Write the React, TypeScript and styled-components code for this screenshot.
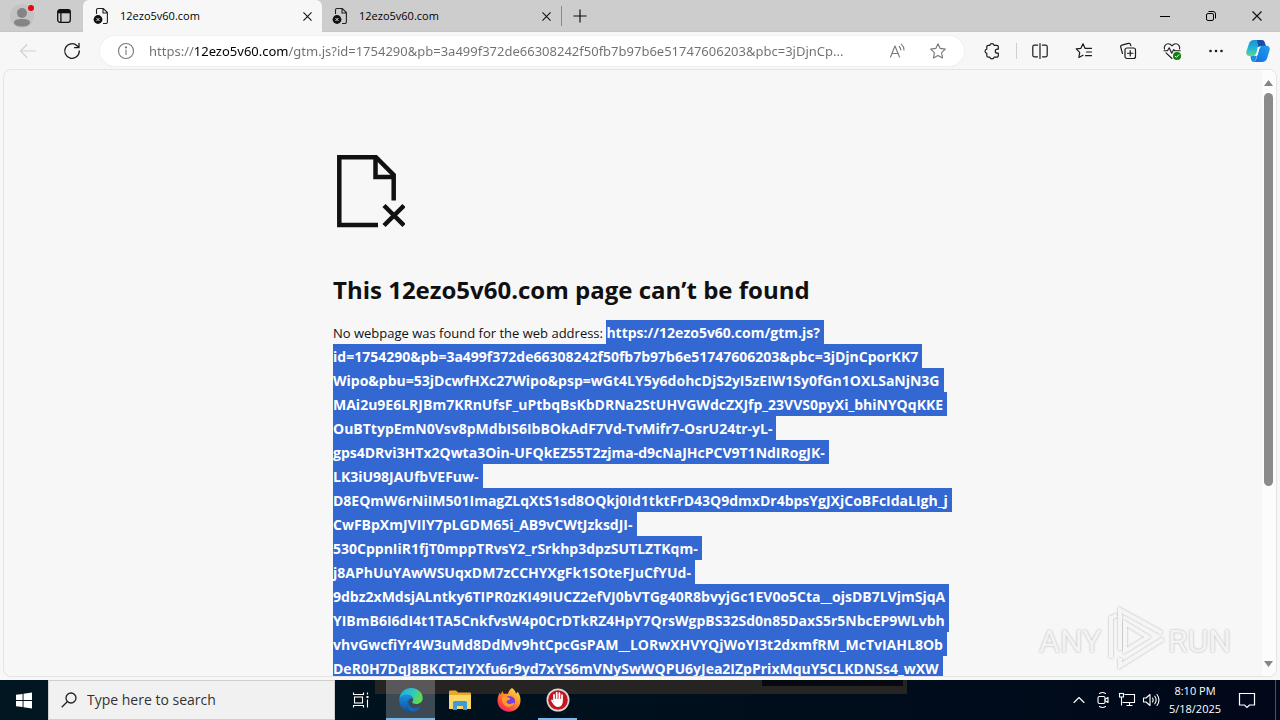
import React from "react";
import styled, { createGlobalStyle } from "styled-components";

const GlobalStyle = createGlobalStyle`
  * { box-sizing: border-box; }
  body {
    margin: 0;
    overflow: hidden;
    background: #f7f7f7;
    font-family: "Open Sans", "Noto Sans", sans-serif;
    color: #111;
  }
  button { border: 0; padding: 0; background: none; color: inherit; font: inherit; }
  svg { display: block; flex: none; }
`;

const Desktop = styled.div`
  display: flex;
  flex-direction: column;
  height: 100vh;
`;

const TabStrip = styled.header`
  display: flex;
  align-items: stretch;
  height: 32px;
  flex: none;
  background: #cdcdcd;
  border-bottom: 1px solid #c6c6c6;
`;

const StripButton = styled.button<{ $width: number }>`
  display: flex;
  align-items: center;
  justify-content: center;
  width: ${(p) => p.$width}px;
  flex: none;
`;

const Tab = styled.div<{ $active?: boolean }>`
  display: flex;
  align-items: center;
  width: 239px;
  height: 32px;
  padding: 0 7px 0 10px;
  flex: none;
  border-radius: 6px 6px 0 0;
  background: ${(p) => (p.$active ? "#f7f7f7" : "transparent")};
`;

const TabTitle = styled.span`
  flex: 1;
  margin-left: 11px;
  font-size: 11px;
  line-height: 16px;
  white-space: nowrap;
  color: #000;
`;

const CloseTab = styled.button`
  display: flex;
  align-items: center;
  justify-content: center;
  width: 16px;
  height: 16px;
`;

const TabDivider = styled.span`
  width: 1px;
  height: 20px;
  margin-top: 6px;
  background: #8a8a8a;
`;

const WindowControls = styled.div`
  display: flex;
  margin-left: auto;
`;

const Toolbar = styled.div`
  display: flex;
  align-items: center;
  height: 37px;
  flex: none;
  padding: 0 2px 0 6px;
  background: #f7f7f7;
`;

const ToolButton = styled.button<{ $faded?: boolean; $width?: number }>`
  display: flex;
  align-items: center;
  justify-content: center;
  width: ${(p) => p.$width ?? 44}px;
  height: 30px;
  flex: none;
  color: ${(p) => (p.$faded ? "#d0d0d0" : "#1b1b1b")};
`;

const AddressBar = styled.div`
  display: flex;
  align-items: center;
  flex: 1;
  min-width: 0;
  height: 30px;
  margin: 0 6px;
  padding: 0 6px;
  border-radius: 15px;
  background: #fff;
  box-shadow: 0 0 1px 1px #f0f0f0;
`;

const AddressButton = styled.button`
  display: flex;
  align-items: center;
  justify-content: center;
  width: 40px;
  height: 28px;
  flex: none;
  color: #777;
`;

const AddressInput = styled.input`
  flex: 1;
  min-width: 0;
  height: 28px;
  margin-left: 3px;
  padding: 0;
  border: 0;
  outline: 0;
  font: 13px/20px "Noto Sans", "Open Sans", sans-serif;
  text-overflow: ellipsis;
  color: #6f6f6f;
  background: linear-gradient(to right, #6f6f6f 46px, #000 46px, #000 139px, #6f6f6f 139px);
  background-clip: text;
  -webkit-background-clip: text;
  -webkit-text-fill-color: transparent;
`;

const ToolDivider = styled.span`
  width: 1px;
  height: 16px;
  margin: 0 1px 0 2px;
  background: #cfcfcf;
`;

const Viewport = styled.div`
  display: flex;
  flex: 1;
  min-height: 0;
  margin: 0 3px 3px;
  border: 1px solid #e4e4e4;
  border-radius: 8px;
  overflow: hidden;
  background: #f7f7f7;
  position: relative;
`;

const Page = styled.main`
  flex: 1;
  min-width: 0;
  overflow: hidden;
`;

const ErrorCard = styled.section`
  width: 600px;
  margin: 0 auto;
  padding-top: 84px;
`;

const Heading = styled.h1`
  margin: 42px 0 0;
  font-size: 24px;
  line-height: 40px;
  font-weight: 700;
  color: #101010;
  white-space: nowrap;
`;

const Message = styled.p`
  margin: 11px 0 0;
  font-size: 13px;
  line-height: 24px;
  white-space: nowrap;
  color: #111;
`;

const Selected = styled.strong`
  display: inline-block;
  height: 24px;
  margin-top: -1px;
  padding: 1px 4px 0 0;
  vertical-align: top;
  font-size: 14px;
  font-weight: 700;
  color: #fff;
  background: #3367d1;
`;

const Scrollbar = styled.div`
  display: flex;
  flex-direction: column;
  align-items: center;
  width: 14px;
  flex: none;
  padding: 9px 2px 8px 0;
  background: #fcfcfc;
`;

const ScrollArrow = styled.button`
  display: block;
  height: 8px;
`;

const ScrollTrack = styled.div`
  flex: 1;
  width: 9px;
  margin: 6px 0;
`;

const ScrollThumb = styled.div`
  height: 70%;
  border-radius: 5px;
  background: #8b8b8b;
`;

const Watermark = styled.div`
  position: absolute;
  right: 40px;
  bottom: 4px;
`;

const Taskbar = styled.footer`
  position: relative;
  display: flex;
  height: 40px;
  flex: none;
  background: linear-gradient(to right, #001620, #000f1c 55%, #00081a);
`;

const WindowShadow = styled.div`
  position: absolute;
  left: 375px;
  top: 0;
  width: 532px;
  height: 14px;
  padding: 0 4px 0 0;
  background: #262323;
`;

const ShadowSlot = styled.div`
  width: 141px;
  height: 6px;
  margin-left: auto;
  background: #060a10;
`;

const TaskButton = styled.button<{ $active?: boolean; $running?: boolean; $width?: number }>`
  position: relative;
  display: flex;
  align-items: center;
  justify-content: center;
  width: ${(p) => p.$width ?? 49}px;
  height: 40px;
  flex: none;
  color: #fff;
  background: ${(p) => (p.$active ? "rgba(255, 255, 255, 0.24)" : "transparent")};
  &::after {
    content: "";
    position: absolute;
    left: ${(p) => (p.$active ? 0 : 5)}px;
    right: ${(p) => (p.$active ? 0 : 5)}px;
    bottom: 0;
    height: 2px;
    background: ${(p) => (p.$active || p.$running ? "#76b9ed" : "transparent")};
  }
`;

const SearchBox = styled.label`
  display: flex;
  align-items: center;
  width: 287px;
  height: 40px;
  margin: 0 1px 0 0;
  padding-left: 12px;
  flex: none;
  background: #f1f1f1;
  border: 1px solid #cfcfcf;
`;

const SearchInput = styled.input`
  flex: 1;
  min-width: 0;
  margin-left: 10px;
  padding: 0;
  border: 0;
  outline: 0;
  background: none;
  font: 14px/20px "Open Sans", "Noto Sans", sans-serif;
  &::placeholder { color: #333; opacity: 1; }
`;

const Tray = styled.div`
  display: flex;
  margin-left: auto;
`;

const Clock = styled.time`
  display: flex;
  flex-direction: column;
  align-items: center;
  justify-content: center;
  width: 64px;
  font-size: 11px;
  line-height: 18px;
  color: #fff;
  white-space: nowrap;
`;

const DesktopEdge = styled.span`
  width: 5px;
  margin-left: 8px;
  border-left: 1px solid #4d535f;
`;

const line = { fill: "none", stroke: "currentColor", strokeWidth: 1.1, strokeLinecap: "round", strokeLinejoin: "round" } as const;

const ProfileIcon = () => (
  <svg width="28" height="28" viewBox="0 0 28 28">
    <circle cx="14" cy="14" r="12" fill="#c3c3c3" />
    <circle cx="14" cy="11" r="5" fill="#858585" />
    <path d="M6 20.500C6 18 9 17 14 17s8 1 8 3.500C22 23 18.500 24.500 14 24.500S6 23 6 20.500z" fill="#858585" />
    <circle cx="23" cy="6" r="3" fill="#e30613" />
  </svg>
);
const TabActionsIcon = () => (
  <svg width="16" height="16" viewBox="0 0 16 16" fill="none" stroke="#111" strokeWidth="1.300">
    <rect x="1.700" y="1.700" width="12.600" height="12.600" rx="2.200" />
    <path d="M2 3.600h12" strokeWidth="3.400" />
    <path d="M4.900 4v10" />
  </svg>
);
const BrokenPageIcon = () => (
  <svg width="16" height="18" viewBox="0 0 16 18">
    <path d="M3.500 7V3a1.500 1.500 0 0 1 1.500-1.500h5.300L14.400 5.600V15a1.500 1.500 0 0 1-1.500 1.500H10M10 1.700V6h4.300" fill="none" stroke="#222" strokeWidth="1.100" />
    <circle cx="5" cy="12.500" r="4.400" fill="#111" />
    <path d="M3.500 11l3 3M6.500 11l-3 3" stroke="#ddd" strokeWidth="1" />
  </svg>
);
const CrossIcon = ({ size = 9 }: { size?: number }) => (
  <svg width={size} height={size} viewBox="0 0 10 10" fill="none" stroke="#111" strokeWidth="1.200">
    <path d="M.5.5l9 9M9.500.5l-9 9" />
  </svg>
);
const PlusIcon = () => (
  <svg width="14" height="14" viewBox="0 0 14 14" stroke="#111" strokeWidth="1.200"><path d="M7 .5v13M.5 7h13" /></svg>
);
const MinimizeIcon = () => (
  <svg width="10" height="10" viewBox="0 0 10 10"><path d="M0 5.500h10" stroke="#000" /></svg>
);
const RestoreIcon = () => (
  <svg width="10" height="10" viewBox="0 0 10 10" fill="none" stroke="#000">
    <rect x=".5" y="2.500" width="7" height="7" rx="1.500" />
    <path d="M2.500.5H7A2.500 2.500 0 0 1 9.500 3v4.500" />
  </svg>
);
const BackIcon = () => (
  <svg width="18" height="16" viewBox="0 0 18 16" {...line}><path d="M16.500 8H2M8 1.500L1.500 8 8 14.500" /></svg>
);
const RefreshIcon = () => (
  <svg width="18" height="18" viewBox="0 0 18 18" {...line} strokeWidth={1.3}>
    <path d="M16.300 9a7.300 7.300 0 1 1-2.200-5.200L16 5.600M16 1.300v4.400h-4.400" />
  </svg>
);
const InfoIcon = () => (
  <svg width="18" height="18" viewBox="0 0 18 18" {...line}>
    <circle cx="9" cy="9" r="7.500" /><path d="M9 8v4.500" /><circle cx="9" cy="5.400" r=".5" fill="currentColor" />
  </svg>
);
const ReadAloudIcon = () => (
  <svg width="18" height="16" viewBox="0 0 18 16" {...line}>
    <path d="M1.500 14L6 3l4.500 11M3 10.500h6M10.200 3.500a5 5 0 0 1 1.600 3.500M12.300 1.200A8 8 0 0 1 15 7" />
  </svg>
);
const starPath = "M9 1.700l2.200 4.700 5.100.7-3.700 3.600.9 5.200L9 13.400l-4.500 2.500.9-5.200L1.700 7.100l5.100-.7z";
const StarIcon = () => <svg width="18" height="18" viewBox="0 0 18 18" {...line}><path d={starPath} /></svg>;
const PuzzleIcon = () => (
  <svg width="18" height="18" viewBox="0 0 18 18" {...line} strokeWidth={1.2}>
    <path d="M5.300 3.300h1.500a2.200 2.200 0 0 1 4.300 0h2.700a1.500 1.500 0 0 1 1.500 1.500v2.400h-1a2 2 0 0 0 0 4h1v2.500a1.500 1.500 0 0 1-1.500 1.500h-2.700a2.200 2.200 0 0 1-4.300 0H5.300a1.500 1.500 0 0 1-1.500-1.500v-2.300a2.200 2.200 0 0 1 0-4.300V4.800a1.500 1.500 0 0 1 1.500-1.500z" />
  </svg>
);
const SplitIcon = () => (
  <svg width="18" height="18" viewBox="0 0 18 18" {...line} strokeWidth={1.2}>
    <path d="M6.500 3.200H3.300A1.500 1.500 0 0 0 1.800 4.700v8.600a1.500 1.500 0 0 0 1.500 1.500h3.200M11.500 3.200h3.200a1.500 1.500 0 0 1 1.500 1.500v8.600a1.500 1.500 0 0 1-1.500 1.500h-3.200M9 1.500v15" />
  </svg>
);
const FavoritesIcon = () => (
  <svg width="18" height="18" viewBox="0 0 18 18" {...line} strokeWidth={1.2}>
    <path d="M10 6.300L8 1.800 5.900 6.300l-4.700.6 3.500 3.500-.8 5.100L8 13.300M10 6.300h6.500M11.500 10h5M10.500 13.700h6" />
  </svg>
);
const CollectionsIcon = () => (
  <svg width="18" height="18" viewBox="0 0 18 18" {...line} strokeWidth={1.2}>
    <rect x="6" y="6" width="10.500" height="10.500" rx="2" />
    <path d="M11.250 8.500v5.500M8.500 11.250H14M3.500 11.500L1.700 5.200a1.700 1.700 0 0 1 1.200-2.100l6.500-1.700a1.700 1.700 0 0 1 2.100 1.200l.3 1" />
  </svg>
);
const HealthIcon = () => (
  <svg width="18" height="18" viewBox="0 0 18 18" {...line}>
    <path d="M1.500 7C.5 4 3 1.800 5.200 1.800 7 1.800 8.200 2.800 9 3.800c.8-1 2-2 3.800-2C15 1.800 17.500 4 16.500 7M1 8.700h3.500l1.700-2.900 2.500 5.400 2-3.700 1 1.200h5.500M3 10.800l6 5.700" />
    <circle cx="14" cy="14" r="4" fill="#107c10" stroke="none" />
    <path d="M12.200 14.200l1.200 1.200 2.400-2.600" stroke="#fff" strokeWidth="1" />
  </svg>
);
const MoreIcon = () => (
  <svg width="14" height="4" viewBox="0 0 14 4" fill="#1b1b1b"><circle cx="1.500" cy="2" r="1.300" /><circle cx="7" cy="2" r="1.300" /><circle cx="12.500" cy="2" r="1.300" /></svg>
);
const CopilotIcon = () => (
  <svg width="24" height="24" viewBox="0 0 24 24">
    <defs>
      <linearGradient id="cpA" x1="0" y1="0" x2="0" y2="1"><stop offset="0" stopColor="#1b8fd6" /><stop offset=".5" stopColor="#20b3d8" /><stop offset="1" stopColor="#62d68a" /></linearGradient>
      <linearGradient id="cpB" x1="1" y1="0" x2="0" y2="1"><stop offset="0" stopColor="#2a9bf0" /><stop offset=".5" stopColor="#1585e8" /><stop offset="1" stopColor="#1a6be6" /></linearGradient>
    </defs>
    <path d="M8 1h8.500c-2 .8-2.700 2.700-3.500 5.500l-2.200 7.500c-.6 2-1.600 3-3.300 3H3.300C.8 17-.2 15 .4 12.500L3 4.500C3.800 2.200 5.300 1 8 1z" fill="url(#cpA)" />
    <path d="M11 1h5c1.700 0 2.400 1.200 3 3l.9 3h-4.600c-1.500 0-2.200.6-2.700 2z" fill="#174fa8" />
    <path d="M16 23H7.500c2-.8 2.700-2.700 3.500-5.500l2.200-7.700c.6-2 1.600-3 3.300-3h4.200c2.500 0 3.500 2 2.900 4.500L21 19.500C20.200 21.800 18.700 23 16 23z" fill="url(#cpB)" />
    <path d="M4.500 17h6.300c-.7 2.600-1.500 5.200-3.300 6-1.500-.2-2.200-1.400-2.600-3z" fill="#1c8fdc" />
    <path d="M11.800 8h3c-1 .6-1.300 1.300-1.600 2.300L11.700 16h-2.800c1-.6 1.300-1.300 1.600-2.300z" fill="#fff" />
  </svg>
);
const MissingFileArt = () => (
  <svg width="72" height="74" viewBox="0 0 72 74" fill="none" stroke="#111" strokeWidth="4.500">
    <path d="M45 71H6.300V3.200H43L60.700 21v25.500" />
    <path d="M42.500 3v20H61" />
    <path d="M51 51.500l20 20M71 51.500l-20 20" />
  </svg>
);
const WatermarkArt = styled.svg`
  font-family: Roboto, sans-serif;
  font-size: 32px;
  filter: drop-shadow(0 0 1px #b4b4b4);
`;
const AnyRunMark = () => (
  <WatermarkArt width="200" height="68" viewBox="0 0 200 68" fill="#f3f3f3">
    <text x="3" y="48">ANY</text>
    <text x="132" y="48">RUN</text>
    <path d="M75 54V14l6-3M84 46V6l42 23M127 35L84 62v-8M89 19v28l23-14z" fill="none" stroke="#f5f5f5" strokeWidth="4" />
  </WatermarkArt>
);
const WindowsIcon = () => (
  <svg width="16" height="17" viewBox="0 0 17 17" fill="#fff"><path d="M0 2.500l7-1V8H0zM8 1.300L17 0v8H8zM0 9h7v6.500l-7-1zM8 9h9v8l-9-1.300z" /></svg>
);
const SearchIcon = () => (
  <svg width="16" height="16" viewBox="0 0 16 16" fill="none" stroke="#222" strokeWidth="1.300"><circle cx="10" cy="6" r="5" /><path d="M6.500 9.500L.7 15.300" /></svg>
);
const TaskViewIcon = () => (
  <svg width="18" height="18" viewBox="0 0 18 18" fill="none" stroke="#fff" strokeWidth="1.100">
    <path d="M1.500 1.500v2h10v-2M1.500 16.500v-2h10v2M15.500 1.500v2M15.500 8.500v8" /><rect x="2.500" y="6" width="8" height="6" /><path d="M14.500 6h2" strokeWidth="2" />
  </svg>
);
const EdgeIcon = () => (
  <svg width="24" height="24" viewBox="0 0 24 24">
    <defs>
      <linearGradient id="edA" x1="0" y1="0" x2="1" y2=".4"><stop offset="0" stopColor="#1ba7e0" /><stop offset=".6" stopColor="#2fc9c0" /><stop offset="1" stopColor="#63d94f" /></linearGradient>
      <linearGradient id="edB" x1="0" y1="0" x2="0" y2="1"><stop offset="0" stopColor="#1a91dc" /><stop offset="1" stopColor="#0f4fa0" /></linearGradient>
    </defs>
    <path d="M.3 11C1 4.500 6 0 12.200 0 18.500 0 23.700 4.500 23.700 10c0 3.700-3 6-6.300 6-2.800 0-4.200-1-4.200-2 0-.7 1-1 1-2.600C14.200 9 11.500 7 8.300 7 4.500 7 1.200 9 .3 11z" fill="url(#edA)" />
    <path d="M.3 11C1 8.300 4.500 6.500 8 6.500c3.300 0 6 2.200 6.200 4.500-2.600-1.400-6 1-6 4.700 0 4.300 3.300 7.700 7.600 8-1.200.3-2.400.5-3.800.5C5.400 24.200-.3 18.500.3 11z" fill="url(#edB)" />
    <path d="M10.500 11.800c-3 4 .8 8.400 5.500 8.400 2.600 0 4.400-.8 5.800-1.600-1.600 2.900-4.200 4.700-6.800 5.100-4 .2-7.300-3.700-7-8 .2-2.100 1.200-3.500 2.500-3.900z" fill="#1568b8" />
  </svg>
);
const FolderIcon = () => (
  <svg width="22" height="20" viewBox="0 0 22 20">
    <path d="M0 1.500A1 1 0 0 1 1 .5h6l2 2h12a1 1 0 0 1 1 1V19H0z" fill="#e9a825" /><path d="M0 5h22v14H0z" fill="#fbd767" />
    <path d="M4 20v-7.500a1.500 1.500 0 0 1 1.500-1.500h11a1.500 1.500 0 0 1 1.500 1.500V20h-4v-4H8v4z" fill="#3c9bdc" />
  </svg>
);
const FirefoxIcon = () => (
  <svg width="24" height="24" viewBox="0 0 24 24">
    <defs><linearGradient id="ffA" x1=".9" y1="0" x2=".2" y2="1"><stop offset="0" stopColor="#ffe34a" /><stop offset=".45" stopColor="#ff9426" /><stop offset=".8" stopColor="#ff3f4a" /><stop offset="1" stopColor="#e2226e" /></linearGradient></defs>
    <path d="M15 0c3 2 3.500 4 4 5.500 1-.2 1.300-1 1.300-2C22.500 6 23.700 9 23.500 13c-.3 6-5.200 10.700-11.500 10.700C5.500 23.700.5 19 .5 12.500.5 9.500 1.500 6.500 3 4.500l.6 2.300L5.500 3l1.300 3c1.200-.5 3-.5 4 0C11.500 3.500 13 1.500 15 0z" fill="url(#ffA)" />
    <circle cx="12.500" cy="13.500" r="5.600" fill="#7a3fe0" />
    <path d="M5 9c2 0 3.500-.5 5.500.2 1.500.4 3 1 2.500 2-.6 1-2.700.8-3.300 2-.5 1.300.6 3 3 2.800 2-.2 3-1.500 5-1-1 3-3.500 4.200-6 4C7.500 18.700 4.500 15 5 9z" fill="#ff9a2a" />
  </svg>
);
const HandIcon = () => (
  <svg width="24" height="24" viewBox="0 0 24 24">
    <circle cx="12" cy="12" r="11.500" fill="#d8d8d8" /><circle cx="12" cy="12" r="9.800" fill="#c4141f" />
    <path d="M8 12V7M10.700 11V4.800M13.400 11V5.200M16 12.500V7.200M16 12.500c0 4-1.500 5.500-4 5.500-3 0-4-2.500-6-5.500" fill="none" stroke="#fff" strokeWidth="1.800" strokeLinecap="round" />
    <path d="M8 11h8v3c-1 3-2 4-4 4s-3-1-4-3z" fill="#fff" />
  </svg>
);
const ChevronIcon = () => <svg width="12" height="8" viewBox="0 0 12 8" {...line}><path d="M1 6.500l5-5 5 5" /></svg>;
const MeetIcon = () => (
  <svg width="14" height="18" viewBox="0 0 14 18" {...line}><rect x="2" y="5.500" width="7" height="7" rx="1.500" /><path d="M9 8.200l3-1.700v5L9 9.800M3.500 2.500q3-2 6 0M3.500 15.500q3 2 6 0" /></svg>
);
const NetworkIcon = () => (
  <svg width="18" height="16" viewBox="0 0 18 16" fill="none" stroke="#fff" strokeWidth="1.100"><path d="M6.500 2.500h10v8H4.500M8.500 13.500h6M11.500 10.500v3" /><rect x="1.500" y="1.500" width="4" height="3.500" /><path d="M3.500 5v8.500" /></svg>
);
const VolumeIcon = () => (
  <svg width="18" height="16" viewBox="0 0 18 16" {...line}><path d="M1.500 6H4l4-3.500v11L4 10H1.500zM10.500 6q1.300 2 0 4M12.800 4.200q2.700 3.800 0 7.600M15 2.500q4 5.500 0 11" /></svg>
);
const NoticeIcon = () => (
  <svg width="18" height="17" viewBox="0 0 18 17" fill="none" stroke="#fff" strokeWidth="1.200"><path d="M1.500 1.500h15v11.500h-5L9 15.500 6.500 13h-5z" /></svg>
);

const urlLines = [
  "id=1754290&pb=3a499f372de66308242f50fb7b97b6e51747606203&pbc=3jDjnCporKK7",
  "Wipo&pbu=53jDcwfHXc27Wipo&psp=wGt4LY5y6dohcDjS2yI5zEIW1Sy0fGn1OXLSaNjN3G",
  "MAi2u9E6LRJBm7KRnUfsF_uPtbqBsKbDRNa2StUHVGWdcZXJfp_23VVS0pyXi_bhiNYQqKKE",
  "OuBTtypEmN0Vsv8pMdbIS6IbBOkAdF7Vd-TvMifr7-OsrU24tr-yL-",
  "gps4DRvi3HTx2Qwta3Oin-UFQkEZ55T2zjma-d9cNaJHcPCV9T1NdIRogJK-",
  "LK3iU98JAUfbVEFuw-",
  "D8EQmW6rNiIM501ImagZLqXtS1sd8OQkj0Id1tktFrD43Q9dmxDr4bpsYgJXjCoBFcIdaLIgh_j",
  "CwFBpXmJVIIY7pLGDM65i_AB9vCWtJzksdJI-",
  "530CppnIiR1fjT0mppTRvsY2_rSrkhp3dpzSUTLZTKqm-",
  "j8APhUuYAwWSUqxDM7zCCHYXgFk1SOteFJuCfYUd-",
  "9dbz2xMdsjALntky6TIPR0zKI49IUCZ2efVJ0bVTGg40R8bvyjGc1EV0o5Cta__ojsDB7LVjmSjqA",
  "YIBmB6I6dI4t1TA5CnkfvsW4p0CrDTkRZ4HpY7QrsWgpBS32Sd0n85DaxS5r5NbcEP9WLvbh",
  "vhvGwcfiYr4W3uMd8DdMv9htCpcGsPAM__LORwXHVYQjWoYI3t2dxmfRM_McTvIAHL8Ob",
  "DeR0H7DqJ8BKCTzIYXfu6r9yd7xYS6mVNySwWQPU6yJea2IZpPrixMquY5CLKDNSs4_wXW",
];

const tools = [
  { label: "Split screen", icon: <SplitIcon /> },
  { label: "Favorites", icon: <FavoritesIcon /> },
  { label: "Collections", icon: <CollectionsIcon /> },
  { label: "Browser essentials", icon: <HealthIcon /> },
  { label: "Settings and more", icon: <MoreIcon /> },
];

export default function App() {
  return (
    <Desktop>
      <GlobalStyle />
      <TabStrip>
        <StripButton $width={44} aria-label="Profile"><ProfileIcon /></StripButton>
        <StripButton $width={39} aria-label="Tab actions"><TabActionsIcon /></StripButton>
        <Tab $active>
          <BrokenPageIcon /><TabTitle>12ezo5v60.com</TabTitle>
          <CloseTab aria-label="Close tab"><CrossIcon /></CloseTab>
        </Tab>
        <Tab>
          <BrokenPageIcon /><TabTitle>12ezo5v60.com</TabTitle>
          <CloseTab aria-label="Close tab"><CrossIcon /></CloseTab>
        </Tab>
        <TabDivider />
        <StripButton $width={36} aria-label="New tab"><PlusIcon /></StripButton>
        <WindowControls>
          <StripButton $width={46} aria-label="Minimize"><MinimizeIcon /></StripButton>
          <StripButton $width={46} aria-label="Restore"><RestoreIcon /></StripButton>
          <StripButton $width={46} aria-label="Close"><CrossIcon size={10} /></StripButton>
        </WindowControls>
      </TabStrip>

      <Toolbar>
        <ToolButton $faded aria-label="Back"><BackIcon /></ToolButton>
        <ToolButton aria-label="Refresh"><RefreshIcon /></ToolButton>
        <AddressBar>
          <AddressButton aria-label="Site information"><InfoIcon /></AddressButton>
          <AddressInput
            aria-label="Address"
            defaultValue="https://12ezo5v60.com/gtm.js?id=1754290&pb=3a499f372de66308242f50fb7b97b6e51747606203&pbc=3jDjnCp..."
          />
          <AddressButton aria-label="Read aloud"><ReadAloudIcon /></AddressButton>
          <AddressButton aria-label="Add to favorites"><StarIcon /></AddressButton>
        </AddressBar>
        <ToolButton aria-label="Extensions"><PuzzleIcon /></ToolButton>
        <ToolDivider />
        {tools.map((t) => <ToolButton key={t.label} aria-label={t.label}>{t.icon}</ToolButton>)}
        <ToolButton $width={40} aria-label="Copilot"><CopilotIcon /></ToolButton>
      </Toolbar>

      <Viewport>
        <Page>
          <ErrorCard>
            <MissingFileArt />
            <Heading>This 12ezo5v60.com page can’t be found</Heading>
            <Message>
              No webpage was found for the web address: <Selected>https://12ezo5v60.com/gtm.js?</Selected>
              {urlLines.map((text) => (
                <React.Fragment key={text}><br /><Selected>{text}</Selected></React.Fragment>
              ))}
            </Message>
          </ErrorCard>
        </Page>
        <Scrollbar>
          <ScrollArrow aria-label="Scroll up"><svg width="9" height="6" viewBox="0 0 9 6"><path d="M4.500 0L9 6H0z" fill="#858585" /></svg></ScrollArrow>
          <ScrollTrack><ScrollThumb /></ScrollTrack>
          <ScrollArrow aria-label="Scroll down"><svg width="9" height="6" viewBox="0 0 9 6"><path d="M4.500 6L9 0H0z" fill="#858585" /></svg></ScrollArrow>
        </Scrollbar>
        <Watermark><AnyRunMark /></Watermark>
      </Viewport>

      <Taskbar>
        <WindowShadow><ShadowSlot /></WindowShadow>
        <TaskButton $width={48} aria-label="Start"><WindowsIcon /></TaskButton>
        <SearchBox>
          <SearchIcon />
          <SearchInput aria-label="Search" placeholder="Type here to search" />
        </SearchBox>
        <TaskButton $width={50} aria-label="Task view"><TaskViewIcon /></TaskButton>
        <TaskButton $active aria-label="Microsoft Edge"><EdgeIcon /></TaskButton>
        <TaskButton aria-label="File Explorer"><FolderIcon /></TaskButton>
        <TaskButton aria-label="Firefox"><FirefoxIcon /></TaskButton>
        <TaskButton $running aria-label="Blocker"><HandIcon /></TaskButton>
        <Tray>
          <TaskButton $width={24} aria-label="Show hidden icons"><ChevronIcon /></TaskButton>
          <TaskButton $width={24} aria-label="Meet now"><MeetIcon /></TaskButton>
          <TaskButton $width={24} aria-label="Network"><NetworkIcon /></TaskButton>
          <TaskButton $width={24} aria-label="Volume"><VolumeIcon /></TaskButton>
          <Clock><span>8:10 PM</span><span>5/18/2025</span></Clock>
          <TaskButton $width={40} aria-label="Notifications"><NoticeIcon /></TaskButton>
          <DesktopEdge />
        </Tray>
      </Taskbar>
    </Desktop>
  );
}
